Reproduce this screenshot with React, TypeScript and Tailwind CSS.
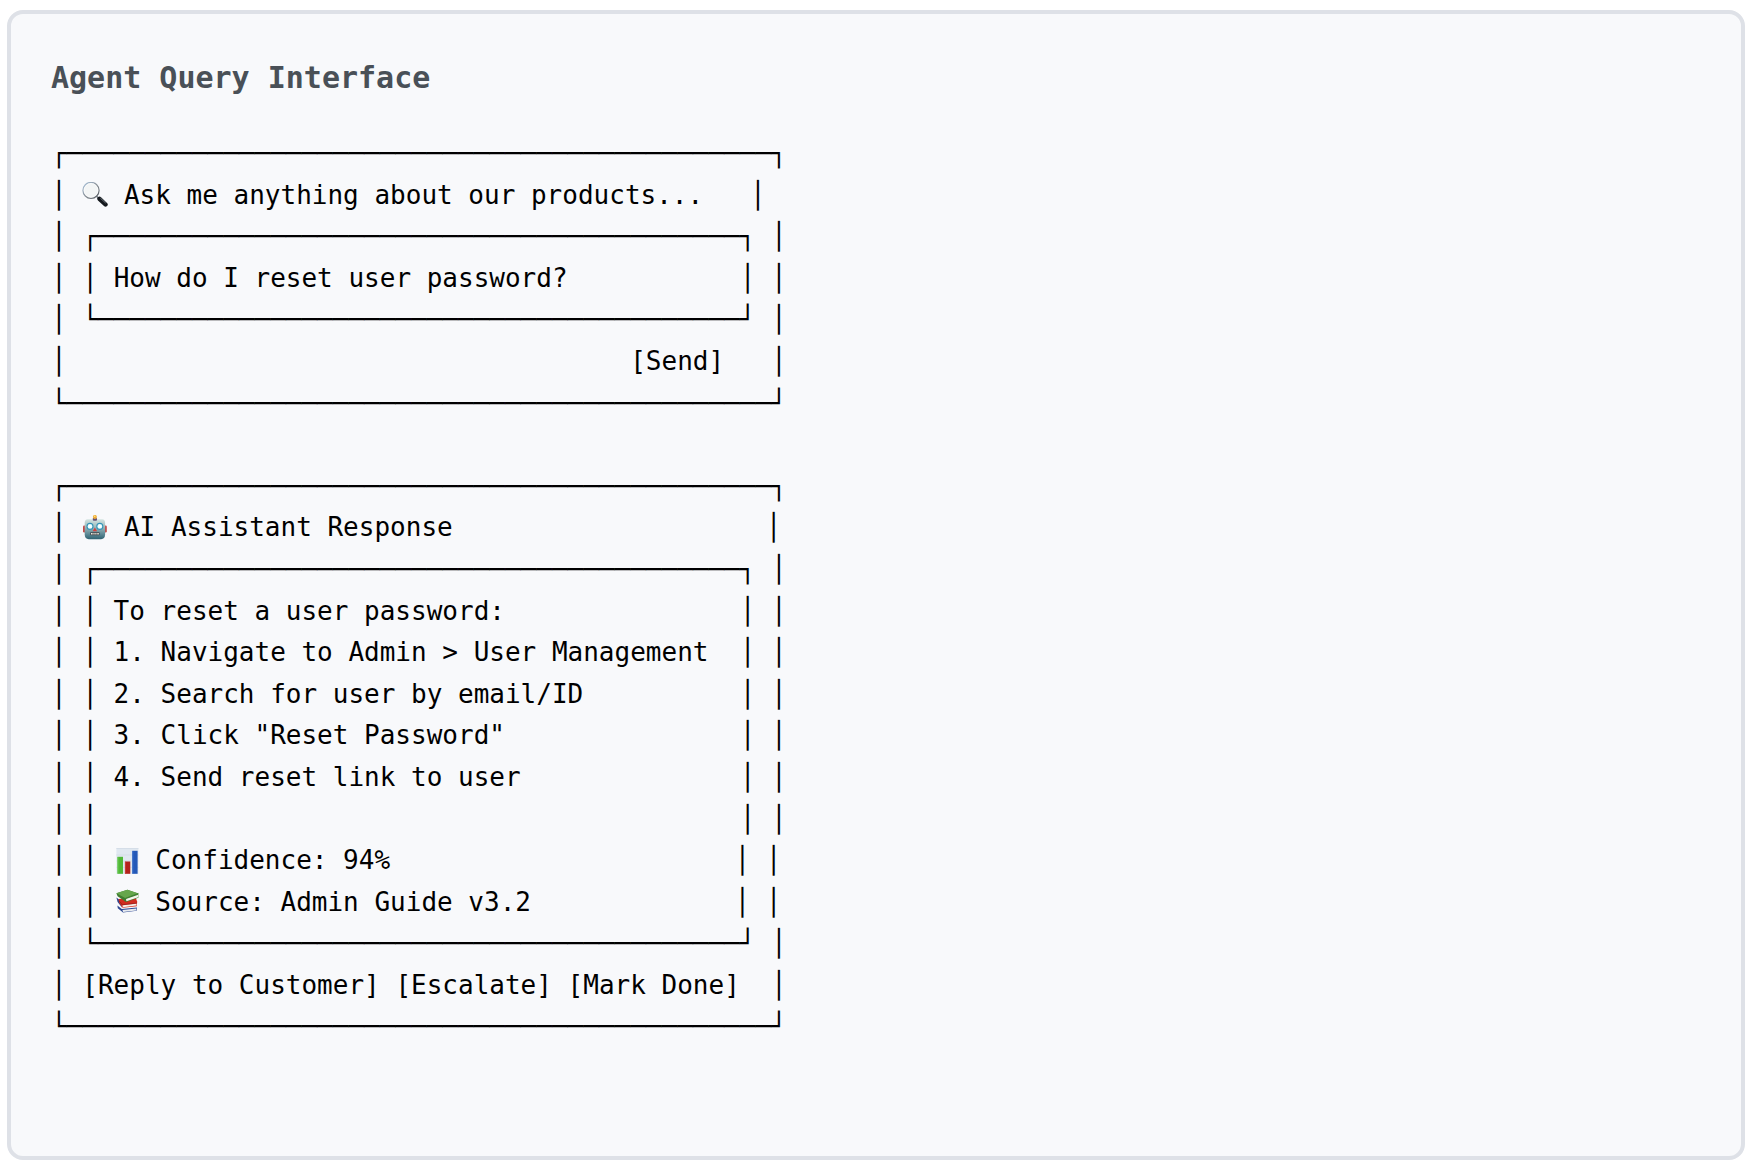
import type { ReactNode } from "react";

const EDGE = "─";

function Row({ children }: { children: ReactNode }) {
  return <div className="flex items-center whitespace-pre">{children}</div>;
}

function Outer({ top }: { top?: boolean }) {
  return (
    <Row>
      <span aria-hidden="true">{(top ? "┌" : "└") + EDGE.repeat(45) + (top ? "┐" : "┘")}</span>
    </Row>
  );
}

function Inner({ top }: { top?: boolean }) {
  return (
    <Row>
      <span aria-hidden="true">
        {"│ " + (top ? "┌" : "└") + EDGE.repeat(41) + (top ? "┐" : "┘") + " │"}
      </span>
    </Row>
  );
}

function InnerLine({ text = "" }: { text?: string }) {
  return (
    <Row>
      <span>{"│ │ " + text.padEnd(40) + "│ │"}</span>
    </Row>
  );
}

function SearchIcon() {
  return (
    <svg className="size-[26px] shrink-0" viewBox="0 0 26 26" aria-hidden="true">
      <defs>
        <linearGradient id="rim" x1="0" y1="0" x2="1" y2="1">
          <stop offset="0" stopColor="#a9c3dd" />
          <stop offset="0.5" stopColor="#8b9299" />
          <stop offset="1" stopColor="#4d5358" />
        </linearGradient>
      </defs>
      <path d="M14.6 14.2l3 3" stroke="#7b8288" strokeWidth="1.6" />
      <path d="M17.5 16.8l6 5.7" stroke="#15191d" strokeWidth="4.4" strokeLinecap="round" />
      <path d="M18.6 16.3l4.8 4.5" stroke="#69737b" strokeWidth="1" strokeLinecap="round" />
      <circle cx="9" cy="8.4" r="8" fill="#f3f5f5" stroke="url(#rim)" strokeWidth="1.3" />
      <circle cx="9" cy="8.4" r="7" fill="none" stroke="#fff" strokeWidth="0.6" />
    </svg>
  );
}

function RobotIcon() {
  return (
    <svg className="size-[26px] shrink-0" viewBox="0 0 26 26" aria-hidden="true">
      <defs>
        <linearGradient id="head" x1="0" y1="0" x2="0" y2="1">
          <stop offset="0" stopColor="#d5e5e2" />
          <stop offset="0.35" stopColor="#a3bfc0" />
          <stop offset="0.7" stopColor="#658f9a" />
          <stop offset="1" stopColor="#2f6272" />
        </linearGradient>
      </defs>
      <rect x="1" y="10.5" width="3" height="7" rx="1.3" fill="#c24b49" />
      <rect x="21.8" y="10.5" width="3" height="7" rx="1.3" fill="#c24b49" />
      <path d="M5.5 4.2h14.8c1.8 0 2.8 1.6 2.8 3.8v11.5c0 2.8-1.6 4.7-4 4.7H6.7c-2.4 0-4-1.9-4-4.7V8c0-2.2 1-3.8 2.8-3.8z" fill="url(#head)" />
      <rect x="10.8" y="2.8" width="4.2" height="3" rx="1" fill="#655177" />
      <circle cx="12.9" cy="1.9" r="2" fill="#f0ad36" />
      <circle cx="12.7" cy="1.2" r="0.8" fill="#ffe68c" />
      <circle cx="8" cy="11.4" r="3" fill="#e9ffff" stroke="#3593b7" strokeWidth="1.1" />
      <circle cx="17.8" cy="11.4" r="3" fill="#e9ffff" stroke="#3593b7" strokeWidth="1.1" />
      <circle cx="8" cy="11.4" r="1.3" fill="#fff" />
      <circle cx="17.8" cy="11.4" r="1.3" fill="#fff" />
      <path d="M12.9 12.4l2.2 3.9h-4.4z" fill="#d2423f" />
      <rect x="8.2" y="17.2" width="9.4" height="3" rx="0.6" fill="#40464b" />
      <path d="M9 18.7h1.6m.8 0h1.2m.7 0h1.2m.8 0h1.5" stroke="#f3eee2" strokeWidth="1.6" />
    </svg>
  );
}

function ChartIcon() {
  return (
    <svg className="size-[26px] shrink-0" viewBox="0 0 26 26" aria-hidden="true">
      <rect x="2.4" width="22" height="25.8" fill="#e0e8f0" />
      <path d="M2.4.5h22M2.4 7h22M2.4 13h22M2.4 19.4h22" stroke="#d0dae4" strokeWidth="0.7" />
      <rect x="3.4" y="8.8" width="5.6" height="17" fill="#50b837" />
      <rect x="10.9" y="13.5" width="5.4" height="12.3" fill="#b3231c" />
      <rect x="18.2" y="2.8" width="5.4" height="23" fill="#2459b8" />
      <path d="M4 9v16.5" stroke="#72d058" strokeWidth="0.8" />
      <path d="M11.5 13.8v11.7" stroke="#cf4138" strokeWidth="0.8" />
      <path d="M18.8 3.2v22.3" stroke="#4277d1" strokeWidth="0.8" />
    </svg>
  );
}

function BooksIcon() {
  return (
    <svg className="size-[26px] shrink-0" viewBox="0 0 26 26" aria-hidden="true">
      <path d="M3.4 16.5l4.4 3.4 15.2-1.4-.4 3.2-13.6 1.9-5.2-4.4z" fill="#2b4792" />
      <path d="M8.4 21l14-1.5-.3 2-13 1.6z" fill="#e8ebef" />
      <path d="M2.4 8.6l4.4 3.2 1.2 6.6L3.6 13z" fill="#30448c" />
      <path d="M4.6 10l17-1.6 1.6 4.4-.4 4.4-14.2 1.6-3.4-5z" fill="#d12d20" />
      <path d="M8.4 16.2l14.2-1.6-.2 2-13.6 1.6z" fill="#f4eee7" />
      <path d="M5.2 12.2l3.2 3.6 14.4-1.6" fill="none" stroke="#8f1915" strokeWidth="0.7" />
      <path d="M2.4 4.2L13.4.8l11 3.6v4.4L12 13 3.6 7.2z" fill="#3f7d30" />
      <path d="M2.4 4.2L13.4.8l11 3.6L11.6 9.2z" fill="#66a64c" />
      <path d="M12 9.9l12.2-4.2v2.6l-11.8 4z" fill="#f4f5ee" />
      <path d="M11.6 9.2l12.8-4.8" stroke="#3d7f31" strokeWidth="0.8" />
    </svg>
  );
}

const actions = ["[Reply to Customer]", "[Escalate]", "[Mark Done]"];

export default function App() {
  return (
    <main className="bg-white pt-[10px] pr-[19px] pb-[14px] pl-[7px] text-black">
      <section className="rounded-2xl border-4 border-[#dee1e7] bg-[#f8f9fb] px-10 pt-10 pb-[108px] font-['DejaVu_Sans_Mono',monospace] text-[26px] leading-[1.6]">
        <h3 className="mb-[31px] text-[30px] leading-[48px] font-bold text-[#495057]">
          Agent Query Interface
        </h3>

        <form onSubmit={(e) => e.preventDefault()}>
          <Outer top />
          <Row>
            <span>{"│ "}</span>
            <SearchIcon />
            <span> </span>
            <label htmlFor="query">Ask me anything about our products...</label>
            <span>{"   │"}</span>
          </Row>
          <Inner top />
          <Row>
            <span>{"│ │ "}</span>
            <input
              id="query"
              type="text"
              defaultValue="How do I reset user password?"
              className="w-[40ch] bg-transparent p-0 outline-none"
            />
            <span>{"│ │"}</span>
          </Row>
          <Inner />
          <Row>
            <span>{"│" + " ".repeat(36)}</span>
            <button type="submit">[Send]</button>
            <span>{"   │"}</span>
          </Row>
          <Outer />
        </form>

        <br />

        <article>
          <Outer top />
          <Row>
            <span>{"│ "}</span>
            <RobotIcon />
            <span>{" " + "AI Assistant Response".padEnd(41) + "│"}</span>
          </Row>
          <Inner top />
          <InnerLine text="To reset a user password:" />
          <InnerLine text="1. Navigate to Admin > User Management" />
          <InnerLine text="2. Search for user by email/ID" />
          <InnerLine text={'3. Click "Reset Password"'} />
          <InnerLine text="4. Send reset link to user" />
          <InnerLine />
          <Row>
            <span>{"│ │ "}</span>
            <ChartIcon />
            <span>{" " + "Confidence: 94%".padEnd(37) + "│ │"}</span>
          </Row>
          <Row>
            <span>{"│ │ "}</span>
            <BooksIcon />
            <span>{" " + "Source: Admin Guide v3.2".padEnd(37) + "│ │"}</span>
          </Row>
          <Inner />
          <Row>
            <span>│</span>
            {actions.map((label) => (
              <span key={label}>
                {" "}
                <button type="button">{label}</button>
              </span>
            ))}
            <span>{"  │"}</span>
          </Row>
          <Outer />
        </article>
      </section>
    </main>
  );
}
